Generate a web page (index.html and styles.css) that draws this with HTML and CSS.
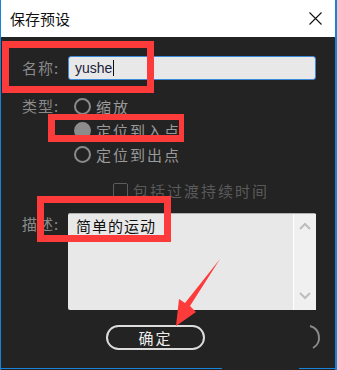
FILE: index.html
```html
<!DOCTYPE html>
<html lang="zh-CN">
<head>
    <meta charset="UTF-8">
    <meta name="viewport" content="width=device-width, initial-scale=1.0">
    <title>保存预设</title>
    <link rel="stylesheet" href="styles.css">
</head>
<body>
    <div id="dialog">
        <div class="titlebar">
            <span class="title">保存预设</span>
            <svg class="close" width="13" height="13" viewBox="0 0 13 13">
                <path d="M0.5 0.5 L12.5 12.5 M12.5 0.5 L0.5 12.5" stroke="#111" stroke-width="1.1" fill="none"/>
            </svg>
        </div>

        <div class="content">
            <div class="row name-row">
                <span class="label">名称:</span>
                <div class="input">yushe<span class="caret"></span></div>
            </div>

            <div class="row type-row">
                <span class="label type-label">类型:</span>
                <div class="radios">
                    <div class="radio-item"><span class="radio"></span><span class="opt">缩放</span></div>
                    <div class="radio-item"><span class="radio checked"></span><span class="opt">定位到入点</span></div>
                    <div class="radio-item"><span class="radio"></span><span class="opt">定位到出点</span></div>
                </div>
            </div>

            <div class="check-row">
                <span class="checkbox"></span>
                <span class="check-text">包括过渡持续时间</span>
            </div>

            <div class="row desc-row">
                <span class="label">描述:</span>
                <div class="textarea">
                    <div class="textarea-text">简单的运动</div>
                    <div class="scrollbar">
                        <svg width="12" height="8" viewBox="0 0 12 8"><path d="M1 7 L6 2 L11 7" stroke="#bdbdbd" stroke-width="2" fill="none"/></svg>
                        <svg width="12" height="8" viewBox="0 0 12 8"><path d="M1 1 L6 6 L11 1" stroke="#bdbdbd" stroke-width="2" fill="none"/></svg>
                    </div>
                </div>
            </div>

            <div class="button-row">
                <button class="ok">确定</button>
                <svg class="spinner" width="16" height="26" viewBox="0 0 16 26">
                    <path d="M4 2 A 12 12 0 0 1 7 24" stroke="#8a8a8a" stroke-width="2" fill="none"/>
                </svg>
            </div>

            <div class="bottom-edge">
                <span class="edge edge-left"></span>
                <span class="edge edge-right"></span>
            </div>
        </div>

        <!-- annotations drawn over the dialog -->
        <div class="mark mark-name"></div>
        <div class="mark mark-type"></div>
        <div class="mark mark-desc"></div>
        <svg class="arrow" width="337" height="370" viewBox="0 0 337 370">
            <polygon points="220,259 190,306 196,312 176,326 179,299 185,303" fill="#fe3b3b"/>
        </svg>
    </div>
</body>
</html>
```

FILE: styles.css
```css
body {
    margin: 0;
    background: #232323;
    font-family: "Noto Sans CJK SC", "Noto Sans", sans-serif;
}

#dialog {
    position: relative;
    width: 334px;
    height: 370px;
    border-left: 1px solid #1883d7;
    border-right: 2px solid #1883d7;
    overflow: hidden;
}

.titlebar {
    height: 37px;
    background: #fff;
    display: flex;
    align-items: center;
    justify-content: space-between;
    padding: 0 13px 0 9px;
    box-sizing: border-box;
}

.title {
    font-size: 15px;
    color: #111;
    line-height: 1;
    margin-top: -1px;
}

.close {
    margin-top: -1px;
}

.content {
    height: 333px;
    background: #232323;
    padding: 19px 0 0 21px;
    box-sizing: border-box;
    position: relative;
}

.row {
    display: flex;
}

.label {
    width: 46px;
    font-size: 15px;
    color: #8a8a8a;
    letter-spacing: 1px;
    line-height: 24px;
    flex-shrink: 0;
}

.name-row {
    height: 24px;
}

.input {
    width: 248px;
    height: 24px;
    box-sizing: border-box;
    background: #e8e8e8;
    border: 1px solid #3a8ad8;
    border-radius: 3px;
    font-family: "Liberation Sans", Arial, sans-serif;
    font-size: 14px;
    color: #1c1c3c;
    padding-left: 6px;
    line-height: 22px;
    display: flex;
    align-items: center;
}

.caret {
    display: inline-block;
    width: 1px;
    height: 16px;
    background: #111;
    margin-left: 1px;
}

.type-row {
    margin-top: 14px;
}

.type-label {
    width: 52px;
}

.radios {
    display: flex;
    flex-direction: column;
}

.radio-item {
    height: 24px;
    display: flex;
    align-items: center;
}

.radio {
    width: 17px;
    height: 17px;
    box-sizing: border-box;
    border: 2.5px solid #8a8a8a;
    border-radius: 50%;
    margin-right: 5px;
}

.radio.checked {
    background: #8c8c8c;
    border-color: #8c8c8c;
}

.opt {
    font-size: 15px;
    color: #9a9a9a;
    letter-spacing: 2px;
}

.check-row {
    margin-top: 14px;
    height: 20px;
    display: flex;
    align-items: center;
    padding-left: 91px;
}

.checkbox {
    width: 15px;
    height: 15px;
    box-sizing: border-box;
    border: 1.5px solid #5c5c5c;
    border-radius: 2px;
    margin-right: 5px;
}

.check-text {
    font-size: 15px;
    color: #5a5a5a;
    letter-spacing: 2px;
}

.desc-row {
    margin-top: 13px;
}

.desc-row .label {
    line-height: 22px;
}

.textarea {
    width: 248px;
    height: 97px;
    background: #e8e8e8;
    border-top: 1px solid #b0b0b0;
    border-radius: 2px;
    box-sizing: border-box;
    display: flex;
}

.textarea-text {
    flex: 1;
    font-size: 15px;
    color: #111;
    letter-spacing: 1px;
    padding: 1px 0 0 8px;
}

.scrollbar {
    width: 23px;
    background: #f0f0f0;
    border-left: 1px solid #fff;
    display: flex;
    flex-direction: column;
    justify-content: space-between;
    align-items: center;
    padding: 8px 0 10px;
    box-sizing: border-box;
}

.button-row {
    margin-top: 14px;
    height: 26px;
    display: flex;
    align-items: center;
    padding-left: 84px;
}

.ok {
    width: 99px;
    height: 25px;
    background: #232323;
    border: 2px solid #dcdcdc;
    border-radius: 13px;
    color: #eee;
    font-family: "Noto Sans CJK SC", sans-serif;
    font-size: 15px;
    letter-spacing: 2px;
    padding: 0;
    line-height: 1;
}

.spinner {
    margin-left: 101px;
}

.bottom-edge {
    position: absolute;
    left: 0;
    right: 0;
    bottom: 1px;
    height: 1px;
    display: flex;
    justify-content: space-between;
}

.edge {
    height: 1px;
    background: #1883d7;
}

.edge-left {
    width: 221px;
}

.edge-right {
    width: 36px;
}

.mark {
    position: absolute;
    border: 7px solid #fe3b3b;
    box-sizing: border-box;
}

.mark-name {
    left: 1px;
    top: 41px;
    width: 152px;
    height: 52px;
}

.mark-type {
    left: 47px;
    top: 114px;
    width: 136px;
    height: 28px;
    border-width: 6px 5px 7px 7px;
}

.mark-desc {
    left: 36px;
    top: 196px;
    width: 134px;
    height: 46px;
}

.arrow {
    position: absolute;
    left: -1px;
    top: 0;
}
```
